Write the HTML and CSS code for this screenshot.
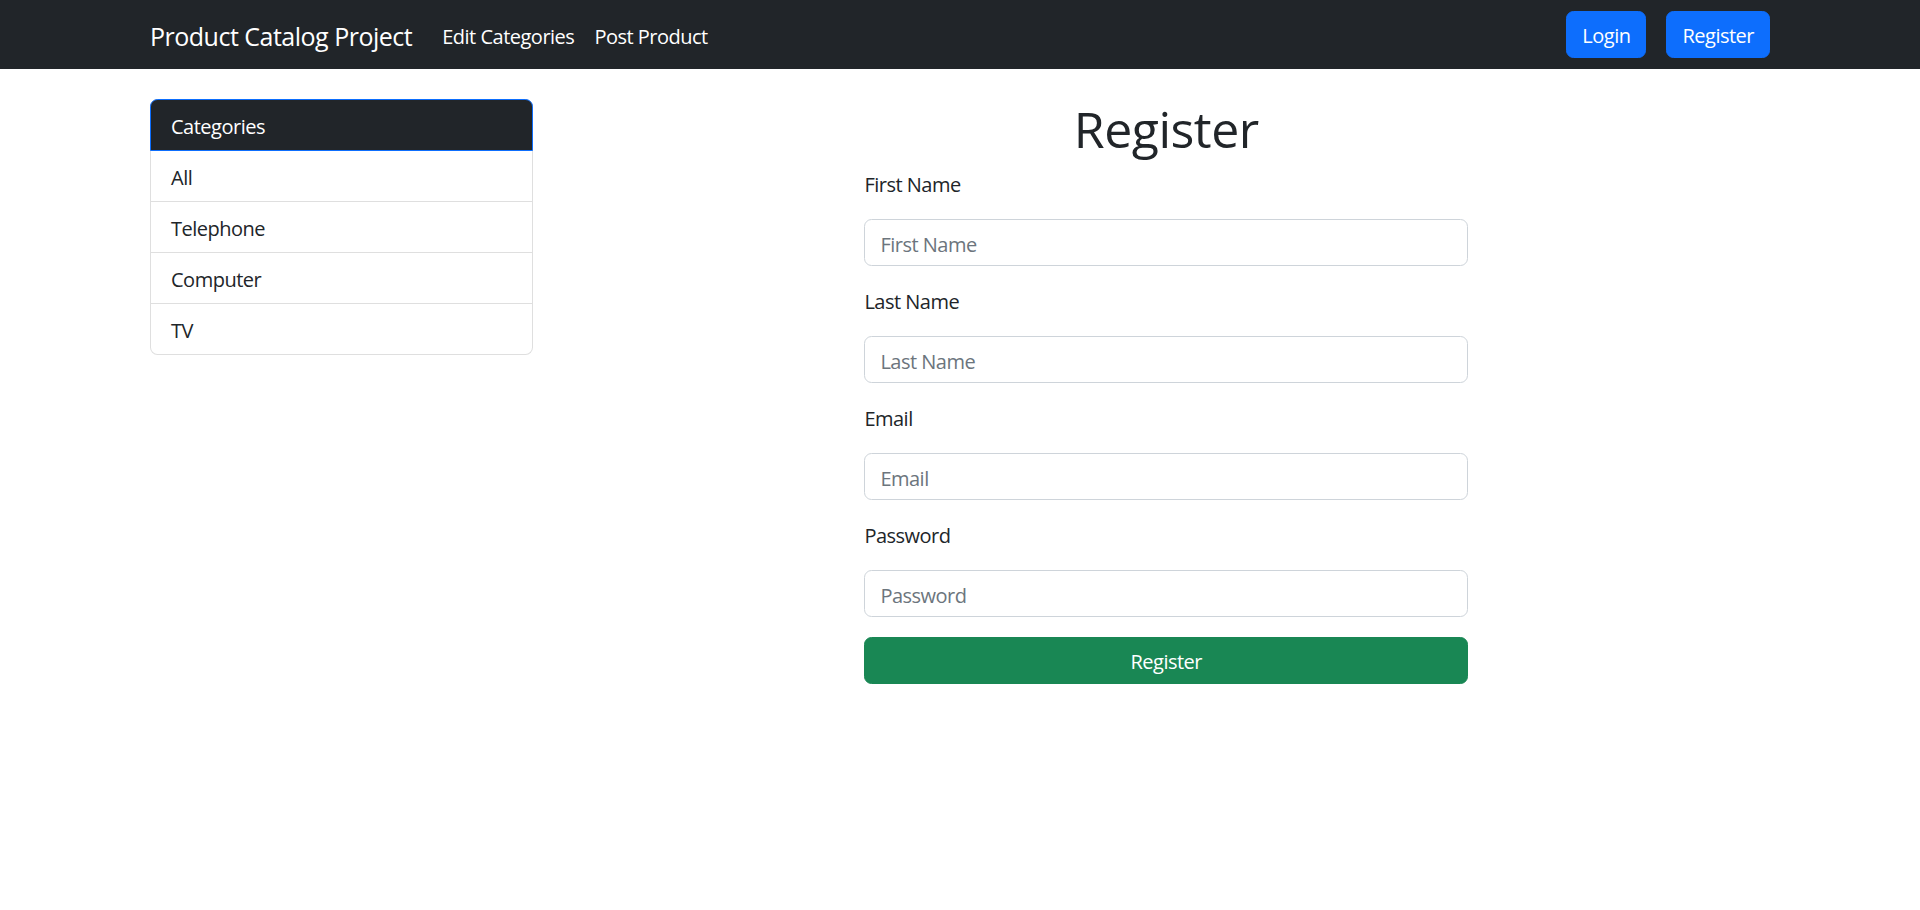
FILE: index.html
```html
<!DOCTYPE html>
<html lang="en">
<head>
<meta charset="utf-8">
<title>Register - Product Catalog Project</title>
<link rel="stylesheet" href="styles.css">
</head>
<body>
<nav class="navbar">
  <div class="container nav-inner">
    <a class="brand" href="#">Product Catalog Project</a>
    <ul class="nav-links">
      <li><a class="nav-link" href="#">Edit Categories</a></li>
      <li><a class="nav-link" href="#">Post Product</a></li>
    </ul>
    <div class="nav-actions">
      <a class="btn btn-primary" href="#">Login</a>
      <a class="btn btn-primary" href="#">Register</a>
    </div>
  </div>
</nav>

<main class="container page">
  <aside class="sidebar">
    <ul class="list-group">
      <li class="list-item list-item-head">Categories</li>
      <li class="list-item">All</li>
      <li class="list-item">Telephone</li>
      <li class="list-item">Computer</li>
      <li class="list-item">TV</li>
    </ul>
  </aside>
  <section class="content">
    <form class="register-form">
      <h1 class="title">Register</h1>
      <div class="field"><label class="form-label" for="fn">First Name</label></div>
      <div class="field"><input class="form-control" id="fn" type="text" placeholder="First Name"></div>
      <div class="field"><label class="form-label" for="ln">Last Name</label></div>
      <div class="field"><input class="form-control" id="ln" type="text" placeholder="Last Name"></div>
      <div class="field"><label class="form-label" for="em">Email</label></div>
      <div class="field"><input class="form-control" id="em" type="email" placeholder="Email"></div>
      <div class="field"><label class="form-label" for="pw">Password</label></div>
      <div class="field"><input class="form-control" id="pw" type="password" placeholder="Password"></div>
      <button class="btn btn-success btn-block" type="button">Register</button>
    </form>
  </section>
</main>
</body>
</html>
```

FILE: styles.css
```css
* {
  box-sizing: border-box;
}

html, body {
  margin: 0;
  padding: 0;
}

body {
  font-family: "Open Sans", "Noto Sans", sans-serif;
  font-size: 20px;
  line-height: 30px;
  letter-spacing: -0.025em;
  color: #212529;
  background: #fff;
}

a {
  text-decoration: none;
  color: inherit;
}

.container {
  width: 1620px;
  margin: 0 auto;
}

/* Navbar */
.navbar {
  background: #212529;
  height: 69px;
}

.nav-inner {
  height: 100%;
  display: flex;
  align-items: center;
}

.brand {
  color: #fff;
  font-size: 25px;
  line-height: 37px;
  padding-top: 3px;
  margin-right: 20px;
}

.nav-links {
  list-style: none;
  margin: 0;
  padding: 0;
  display: flex;
}

.nav-link {
  display: block;
  color: #fff;
  padding: 12px 10px 8px;
  font-size: 20px;
  line-height: 30px;
}

.nav-actions {
  margin-left: auto;
  display: flex;
  gap: 20px;
}

.btn {
  display: inline-block;
  font-family: inherit;
  font-size: 20px;
  line-height: 30px;
  letter-spacing: -0.025em;
  padding: 9px 15px 6px;
  border: 1px solid transparent;
  border-radius: 7.5px;
  color: #fff;
  text-align: center;
  cursor: pointer;
  height: 47px;
}

.btn-primary {
  background: #0d6efd;
  border-color: #0d6efd;
}

.btn-success {
  background: #198754;
  border-color: #198754;
}

.btn-block {
  display: block;
  width: 100%;
}

/* Page */
.page {
  margin-top: 30px;
  display: grid;
  grid-template-columns: 382.5px 1fr;
  column-gap: 30px;
  align-items: start;
}

.list-group {
  list-style: none;
  margin: 0;
  padding: 0;
  border-radius: 7.5px;
}

.list-item {
  padding: 12px 20px 8px;
  line-height: 30px;
  border: 1px solid #dfdfdf;
  border-top-width: 0;
  background: #fff;
  color: #212529;
}

.list-item:last-child {
  border-radius: 0 0 7.5px 7.5px;
}

.list-item-head {
  background: #212529;
  color: #fff;
  border: 1px solid #0d6efd;
  border-radius: 7.5px 7.5px 0 0;
}

.register-form {
  width: 50%;
  margin: 0 auto;
}

.title {
  margin: 0 0 10px;
  font-size: 50px;
  line-height: 60px;
  font-weight: 400;
  text-align: center;
  color: #212529;
}

.field {
  margin-bottom: 20px;
}

.form-label {
  display: block;
  padding-top: 2px;
  line-height: 28px;
  height: 30px;
}

.form-control {
  display: block;
  width: 100%;
  height: 47px;
  padding: 9px 15px 6px;
  font-family: inherit;
  font-size: 20px;
  line-height: 30px;
  letter-spacing: -0.025em;
  color: #212529;
  background: #fff;
  border: 1px solid #ced4da;
  border-radius: 7.5px;
  outline: none;
}

.form-control::placeholder {
  color: #6c757d;
  opacity: 1;
}
```
